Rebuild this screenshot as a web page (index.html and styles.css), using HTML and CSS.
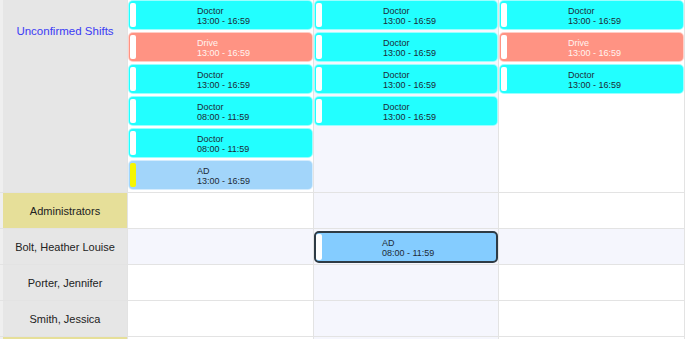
FILE: index.html
```html
<!DOCTYPE html>
<html>
<head>
<meta charset="utf-8">
<link rel="stylesheet" href="styles.css">
</head>
<body>
<div class="schedule">
  <div class="head unconf">Unconfirmed Shifts</div>
  <div class="cell stack">
    <div class="shift doctor"><span class="bar"></span><div class="txt">Doctor<br>13:00 - 16:59</div></div>
    <div class="shift drive"><span class="bar"></span><div class="txt">Drive<br>13:00 - 16:59</div></div>
    <div class="shift doctor"><span class="bar"></span><div class="txt">Doctor<br>13:00 - 16:59</div></div>
    <div class="shift doctor"><span class="bar"></span><div class="txt">Doctor<br>08:00 - 11:59</div></div>
    <div class="shift doctor"><span class="bar"></span><div class="txt">Doctor<br>08:00 - 11:59</div></div>
    <div class="shift ad"><span class="bar yellow"></span><div class="txt">AD<br>13:00 - 16:59</div></div>
  </div>
  <div class="cell stack alt">
    <div class="shift doctor"><span class="bar"></span><div class="txt">Doctor<br>13:00 - 16:59</div></div>
    <div class="shift doctor"><span class="bar"></span><div class="txt">Doctor<br>13:00 - 16:59</div></div>
    <div class="shift doctor"><span class="bar"></span><div class="txt">Doctor<br>13:00 - 16:59</div></div>
    <div class="shift doctor"><span class="bar"></span><div class="txt">Doctor<br>13:00 - 16:59</div></div>
  </div>
  <div class="cell stack">
    <div class="shift doctor"><span class="bar"></span><div class="txt">Doctor<br>13:00 - 16:59</div></div>
    <div class="shift drive"><span class="bar"></span><div class="txt">Drive<br>13:00 - 16:59</div></div>
    <div class="shift doctor"><span class="bar"></span><div class="txt">Doctor<br>13:00 - 16:59</div></div>
  </div>

  <div class="head group">Administrators</div>
  <div class="cell"></div>
  <div class="cell alt"></div>
  <div class="cell"></div>

  <div class="head">Bolt, Heather Louise</div>
  <div class="cell alt"></div>
  <div class="cell alt slot">
    <div class="shift ad-sel"><span class="bar"></span><div class="txt">AD<br>08:00 - 11:59</div></div>
  </div>
  <div class="cell alt"></div>

  <div class="head">Porter, Jennifer</div>
  <div class="cell"></div>
  <div class="cell alt"></div>
  <div class="cell"></div>

  <div class="head">Smith, Jessica</div>
  <div class="cell"></div>
  <div class="cell alt"></div>
  <div class="cell"></div>

  <div class="head group"></div>
  <div class="cell"></div>
  <div class="cell alt"></div>
  <div class="cell"></div>
</div>
</body>
</html>
```

FILE: styles.css
```css
html, body {
  margin: 0;
  padding: 0;
  background: #ffffff;
}

body {
  width: 688px;
  height: 339px;
  overflow: hidden;
  font-family: "Liberation Sans", Arial, sans-serif;
}

.schedule {
  display: grid;
  grid-template-columns: 127px 185px 184px 185px;
  grid-template-rows: 192px 35px 35px 35px 35px 2px;
  gap: 1px;
  width: 685px;
  box-sizing: border-box;
  border-right: 1px solid #e3e3e3;
  background: #e3e3e3;
}

.head {
  box-sizing: border-box;
  border-left: 3px solid #efefef;
  background: #e6e6e6;
  color: #222222;
  font-size: 11px;
  display: flex;
  align-items: center;
  justify-content: center;
}

.head.unconf {
  align-items: flex-start;
  padding-top: 25px;
  color: #3b3bf5;
  font-size: 11.5px;
}

.head.group {
  background: #e6df99;
}

.cell {
  background: #ffffff;
}

.cell.alt {
  background: #f5f6fd;
}

.stack {
  display: flex;
  flex-direction: column;
  gap: 2px;
}

.slot {
  padding-top: 2px;
  box-sizing: border-box;
}

.shift {
  box-sizing: border-box;
  height: 30px;
  border-radius: 5px;
  border: 1px solid rgba(255, 255, 255, 0.55);
  display: flex;
  align-items: stretch;
  color: #1d2a36;
  font-size: 9px;
  line-height: 10px;
}

.shift .bar {
  flex: none;
  width: 6px;
  margin: 2px 0 2px 1px;
  border-radius: 2px;
  background: #ffffff;
}

.shift .bar.yellow {
  background: #f6f600;
}

.shift .txt {
  margin-left: 61px;
  align-self: center;
  padding-top: 1px;
}

.doctor {
  background: #22ffff;
}

.drive {
  background: #ff9383;
  color: #fff3f0;
}

.ad {
  background: #a2d5fa;
}

.ad-sel {
  height: 32px;
  background: #84ccff;
  border: 2px solid #2e3b45;
}

.ad-sel .bar {
  margin: 1px 0 1px 0;
  border-radius: 2px;
}

.ad-sel .txt {
  margin-left: 60px;
}
```
